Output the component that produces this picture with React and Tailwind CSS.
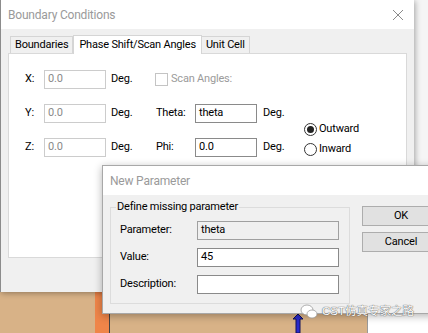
import React from 'react';

const font = { fontFamily: 'Roboto, "Liberation Sans", Arial, sans-serif' };

const Field = ({ value, disabled, gray, w = 'w-[62px]' }) => (
    <div className={`${w} h-[19px] flex items-center px-[3px] border ${disabled ? 'border-[#cccccc] text-[#8a8a8a] bg-white' : gray ? 'border-[#a0a0a0] bg-[#f0f0f0] text-black' : 'border-[#8a8a8a] bg-white text-black'}`}>
        {value}
    </div>
);

const Radio = ({ checked, label }) => (
    <div className="flex items-center h-[20px]">
        <span className="w-[13px] h-[13px] rounded-full border border-[#333] bg-white flex items-center justify-center">
            {checked && <span className="w-[7px] h-[7px] rounded-full bg-[#222]" />}
        </span>
        <span className="ml-[2px]">{label}</span>
    </div>
);

const BoundaryDialog = () => (
    <div className="absolute left-0 top-0 w-[414px] h-[292px] bg-[#f0f0f0] border-l border-[#8c8c8c] shadow-[1px_1px_6px_rgba(0,0,0,0.35)] flex flex-col">
        {/* title */}
        <div className="h-[29px] bg-white flex items-center justify-between pl-[7px] pr-[10px] shrink-0">
            <span className="text-[12px] text-[#9a9a9a]">Boundary Conditions</span>
            <svg width="12" height="12" viewBox="0 0 12 12" className="stroke-[#8a8a8a]">
                <path d="M1 1 L11 11 M11 1 L1 11" strokeWidth="1" />
            </svg>
        </div>
        <div className="px-[7px]">
            {/* tabs */}
            <div className="flex items-end h-[24px] pl-[2px]">
                <div className="h-[17px] px-[4px] flex items-center border border-b-0 border-[#d5d5d5] bg-[#f0f0f0] text-black">Boundaries</div>
                <div className="h-[19px] -mb-px px-[5px] flex items-start pt-[1px] border border-b-0 border-[#d5d5d5] bg-white text-black relative z-10">Phase Shift/Scan Angles</div>
                <div className="h-[17px] px-[4px] flex items-center border border-b-0 border-l-0 border-[#d5d5d5] bg-[#f0f0f0] text-black">Unit Cell</div>
            </div>
            {/* panel */}
            <div className="h-[205px] bg-white border border-[#d9d9d9] flex">
                <div className="w-[287px] pt-[16px] pl-[16px] flex flex-col gap-[15px]">
                    <div className="flex items-center h-[19px]">
                        <span className="w-[19px]">X:</span>
                        <Field value="0.0" disabled />
                        <span className="ml-[5px] w-[44px]">Deg.</span>
                        <span className="w-[13px] h-[13px] border border-[#c4c4c4] bg-white" />
                        <span className="ml-[3px] text-[#9b9b9b]">Scan Angles:</span>
                    </div>
                    <div className="flex items-center h-[19px]">
                        <span className="w-[19px]">Y:</span>
                        <Field value="0.0" disabled />
                        <span className="ml-[5px] w-[45px]">Deg.</span>
                        <span className="w-[39px]">Theta:</span>
                        <Field value="theta" />
                        <span className="ml-[6px]">Deg.</span>
                    </div>
                    <div className="flex items-center h-[19px]">
                        <span className="w-[19px]">Z:</span>
                        <Field value="0.0" disabled />
                        <span className="ml-[5px] w-[45px]">Deg.</span>
                        <span className="w-[39px]">Phi:</span>
                        <Field value="0.0" />
                        <span className="ml-[6px]">Deg.</span>
                    </div>
                </div>
                <div className="ml-[8px] pt-[65px] flex flex-col">
                    <Radio checked label="Outward" />
                    <Radio label="Inward" />
                </div>
            </div>
        </div>
    </div>
);

const NewParameterDialog = () => (
    <div className="absolute left-[102px] top-[165px] w-[340px] h-[149px] bg-[#f0f0f0] border border-[#a8a8a8] shadow-[0_2px_8px_rgba(0,0,0,0.3)] flex flex-col">
        <div className="h-[29px] bg-white flex items-center pl-[7px] shrink-0">
            <span className="text-[12px] text-[#9a9a9a]">New Parameter</span>
        </div>
        <div className="flex pl-[7px] pt-[12px]">
            {/* group box */}
            <div className="relative w-[240px] h-[97px] border border-[#dcdcdc] pl-[9px] pt-[13px] flex flex-col gap-[8px]">
                <span className="absolute left-[5px] -top-[8px] px-[1px] bg-[#f0f0f0] leading-[14px]">Define missing parameter</span>
                <div className="flex items-center h-[19px]">
                    <span className="w-[77px]">Parameter:</span>
                    <Field value="theta" gray w="w-[142px]" />
                </div>
                <div className="flex items-center h-[19px]">
                    <span className="w-[77px]">Value:</span>
                    <Field value="45" w="w-[142px]" />
                </div>
                <div className="flex items-center h-[19px]">
                    <span className="w-[77px]">Description:</span>
                    <Field value="" w="w-[142px]" />
                </div>
            </div>
            <div className="ml-[12px] -mt-[1px] flex flex-col gap-[6px]">
                <div className="w-[78px] h-[20px] bg-[#e1e1e1] border border-[#adadad] flex items-center justify-center">OK</div>
                <div className="w-[78px] h-[20px] bg-[#e1e1e1] border border-[#adadad] flex items-center justify-center">Cancel</div>
            </div>
        </div>
    </div>
);

export default function App() {
    return (
        <div className="relative w-[428px] h-[333px] overflow-hidden bg-[#f5f5f5] text-[11px] tracking-[-0.2px] text-black" style={font}>
            {/* desktop behind */}
            <div className="absolute left-0 right-0 top-[290px] bottom-0 bg-[#d8b287] flex">
                <div className="ml-[95px] w-[15px] bg-[#ef8549] border-r border-[#444]" />
                <div className="ml-auto w-[61px] bg-white border-l border-[#9a9a9a]" />
            </div>
            <svg className="absolute left-[292px] top-[314px]" width="12" height="19" viewBox="0 0 12 19">
                <path d="M6 0 L11 5 L8 5 L8 19 L4 19 L4 5 L1 5 Z" fill="#2a2acc" stroke="#10105a" strokeWidth="1" />
            </svg>

            <BoundaryDialog />
            <NewParameterDialog />

            {/* watermark */}
            <div className="absolute left-[300px] top-[303px] flex items-center gap-[4px]">
                <svg width="18" height="15" viewBox="0 0 18 15">
                    <ellipse cx="7" cy="6" rx="6" ry="5" fill="#ffffff" stroke="#9a9a9a" strokeWidth="0.8" />
                    <ellipse cx="12" cy="10" rx="5" ry="4" fill="#ffffff" stroke="#9a9a9a" strokeWidth="0.8" />
                </svg>
                <span className="text-[11.5px] tracking-normal text-white [text-shadow:0_0_1px_#555,0_0_1px_#555]" style={{ fontFamily: '"Liberation Sans", "Noto Sans CJK SC", sans-serif' }}>CST仿真专家之路</span>
            </div>
        </div>
    );
}
